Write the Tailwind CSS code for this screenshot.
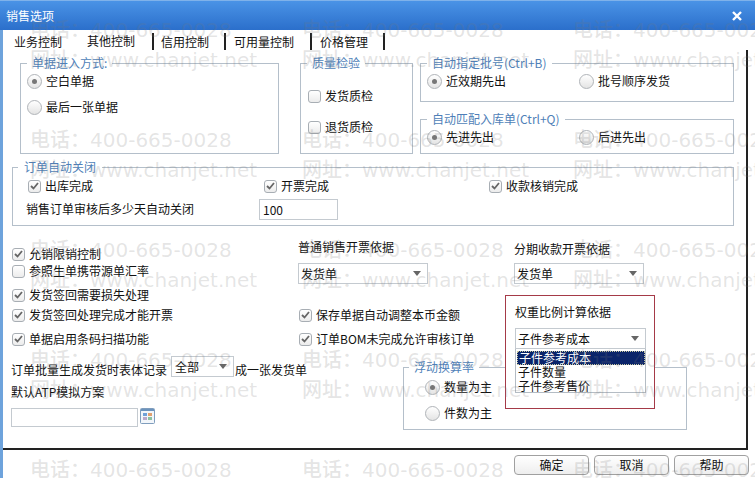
<!DOCTYPE html>
<html lang="zh-CN">
<head>
  <meta charset="UTF-8" />
  <title>销售选项</title>
  <script src="https://cdn.jsdelivr.net/npm/@tailwindcss/browser@4"></script>
</head>
<body class="bg-white">
  <div class="relative w-[755px] h-[478px] overflow-hidden bg-white text-[12px] leading-4 text-[#111] font-['Noto_Sans_CJK_SC','Liberation_Sans',sans-serif]">

    <!-- title bar -->
    <div class="h-[30px] flex items-center justify-between pl-[6px] pr-[13px] bg-gradient-to-b from-[#4a93e6] to-[#2b6fcb] text-white border-t border-[#7fb2ea]">
      <span>销售选项</span>
      <svg width="10" height="10" viewBox="0 0 10 10"><path d="M1 1l8 8M9 1l-8 8" stroke="#fff" stroke-width="2.4" /></svg>
    </div>

    <!-- body -->
    <div class="h-[448px] border-l-[3px] border-[#6ea3dc]">
      <!-- tabs -->
      <div class="flex h-[20px] pl-[11px] pt-[3px]">
        <span class="pt-[1px]">业务控制</span>
        <span class="ml-[25px] pr-[17px] border-r-2 border-[#222]">其他控制</span>
        <span class="pl-[7px] pr-[15px] pt-[1px] border-r-2 border-[#222]">信用控制</span>
        <span class="pl-[8px] pr-[16px] pt-[1px] border-r-2 border-[#222]">可用量控制</span>
        <span class="pl-[8px] pr-[15px] pt-[1px] border-r-2 border-[#222]">价格管理</span>
      </div>

      <!-- panel -->
      <div class="relative w-[745px] h-[400px] border-r-2 border-b-2 border-[#222] pl-[9px]">
        <div class="flex pt-[5px] pl-[8px]">
          <fieldset class="w-[259px] h-[99px] border border-[#b4bfca]">
            <legend class="ml-[6px] px-[5px] text-[#4f7fb8]">单据进入方式:</legend>
            <div class="flex items-center gap-1 pl-[6px] pt-[2px]">
              <span class="w-[15px] h-[15px] rounded-full border border-[#b0b4b8] bg-gradient-to-b from-white to-[#e4e4e4] flex items-center justify-center"><span class="w-[5px] h-[5px] rounded-full bg-[#777]"></span></span>
              <span>空白单据</span>
            </div>
            <div class="flex items-center gap-1 pl-[6px] pt-[10px]">
              <span class="w-[15px] h-[15px] rounded-full border border-[#b0b4b8] bg-gradient-to-b from-white to-[#e4e4e4]"></span>
              <span>最后一张单据</span>
            </div>
          </fieldset>

          <fieldset class="ml-[21px] w-[113px] h-[99px] border border-[#b4bfca]">
            <legend class="ml-[6px] px-[5px] text-[#4f7fb8]">质量检验</legend>
            <div class="flex items-center gap-1 pl-[7px] pt-[17px]">
              <span class="w-[13px] h-[13px] rounded-[3px] border border-[#a8aeb4] bg-gradient-to-b from-white to-[#ececec]"></span>
              <span>发货质检</span>
            </div>
            <div class="flex items-center gap-1 pl-[7px] pt-[15px]">
              <span class="w-[13px] h-[13px] rounded-[3px] border border-[#a8aeb4] bg-gradient-to-b from-white to-[#ececec]"></span>
              <span>退货质检</span>
            </div>
          </fieldset>

          <div class="ml-[7px] w-[314px]">
            <fieldset class="h-[47px] border border-[#b4bfca]">
              <legend class="ml-[6px] px-[5px] text-[#4f7fb8]">自动指定批号(Ctrl+B)</legend>
              <div class="flex pl-[6px] pt-[2px]">
                <div class="flex items-center gap-1 w-[152px]">
                  <span class="w-[15px] h-[15px] rounded-full border border-[#b0b4b8] bg-gradient-to-b from-white to-[#e4e4e4] flex items-center justify-center"><span class="w-[5px] h-[5px] rounded-full bg-[#777]"></span></span>
                  <span>近效期先出</span>
                </div>
                <div class="flex items-center gap-1">
                  <span class="w-[15px] h-[15px] rounded-full border border-[#b0b4b8] bg-gradient-to-b from-white to-[#e4e4e4]"></span>
                  <span>批号顺序发货</span>
                </div>
              </div>
            </fieldset>
            <fieldset class="mt-[9px] h-[43px] border border-[#b4bfca]">
              <legend class="ml-[6px] px-[5px] text-[#4f7fb8]">自动匹配入库单(Ctrl+Q)</legend>
              <div class="flex pl-[6px] pt-[2px]">
                <div class="flex items-center gap-1 w-[152px]">
                  <span class="w-[15px] h-[15px] rounded-full border border-[#b0b4b8] bg-gradient-to-b from-white to-[#e4e4e4] flex items-center justify-center"><span class="w-[5px] h-[5px] rounded-full bg-[#777]"></span></span>
                  <span>先进先出</span>
                </div>
                <div class="flex items-center gap-1">
                  <span class="w-[15px] h-[15px] rounded-full border border-[#b0b4b8] bg-gradient-to-b from-white to-[#e4e4e4]"></span>
                  <span>后进先出</span>
                </div>
              </div>
            </fieldset>
          </div>
        </div>

        <!-- 订单自动关闭 -->
        <fieldset class="mt-[5px] w-[722px] h-[67px] border border-[#b4bfca]">
          <legend class="ml-[5px] px-[6px] text-[#4f7fb8]">订单自动关闭</legend>
          <div class="flex pl-[15px] pt-[3px]">
            <div class="flex items-center gap-1 w-[236px]">
              <span class="w-[13px] h-[13px] rounded-[3px] border border-[#a8aeb4] bg-gradient-to-b from-white to-[#ececec] flex items-center justify-center"><svg width="9" height="8" viewBox="0 0 9 8"><path d="M1 4l2.5 2.5L8 1" fill="none" stroke="#666" stroke-width="1.8" /></svg></span>
              <span>出库完成</span>
            </div>
            <div class="flex items-center gap-1 w-[225px]">
              <span class="w-[13px] h-[13px] rounded-[3px] border border-[#a8aeb4] bg-gradient-to-b from-white to-[#ececec] flex items-center justify-center"><svg width="9" height="8" viewBox="0 0 9 8"><path d="M1 4l2.5 2.5L8 1" fill="none" stroke="#666" stroke-width="1.8" /></svg></span>
              <span>开票完成</span>
            </div>
            <div class="flex items-center gap-1">
              <span class="w-[13px] h-[13px] rounded-[3px] border border-[#a8aeb4] bg-gradient-to-b from-white to-[#ececec] flex items-center justify-center"><svg width="9" height="8" viewBox="0 0 9 8"><path d="M1 4l2.5 2.5L8 1" fill="none" stroke="#666" stroke-width="1.8" /></svg></span>
              <span>收款核销完成</span>
            </div>
          </div>
          <div class="flex items-center pl-[13px] mt-[5px]">
            <span class="w-[233px] -mt-px">销售订单审核后多少天自动关闭</span>
            <div class="w-[79px] h-[21px] border border-[#c4cad0] pl-[3px] flex items-center">100</div>
          </div>
        </fieldset>

        <!-- lower options -->
        <div class="flex">
          <div class="w-[287px] -ml-px">
            <div class="flex items-center gap-1 pl-px mt-[20px] h-4">
              <span class="w-[13px] h-[13px] rounded-[3px] border border-[#a8aeb4] bg-gradient-to-b from-white to-[#ececec] flex items-center justify-center"><svg width="9" height="8" viewBox="0 0 9 8"><path d="M1 4l2.5 2.5L8 1" fill="none" stroke="#666" stroke-width="1.8" /></svg></span>
              <span>允销限销控制</span>
            </div>
            <div class="flex items-center gap-1 pl-px mt-px h-4">
              <span class="w-[13px] h-[13px] rounded-[3px] border border-[#a8aeb4] bg-gradient-to-b from-white to-[#ececec]"></span>
              <span>参照生单携带源单汇率</span>
            </div>
            <div class="flex items-center gap-1 pl-px mt-[8px] h-4">
              <span class="w-[13px] h-[13px] rounded-[3px] border border-[#a8aeb4] bg-gradient-to-b from-white to-[#ececec] flex items-center justify-center"><svg width="9" height="8" viewBox="0 0 9 8"><path d="M1 4l2.5 2.5L8 1" fill="none" stroke="#666" stroke-width="1.8" /></svg></span>
              <span>发货签回需要损失处理</span>
            </div>
            <div class="flex items-center gap-1 pl-px mt-[4px] h-4">
              <span class="w-[13px] h-[13px] rounded-[3px] border border-[#a8aeb4] bg-gradient-to-b from-white to-[#ececec] flex items-center justify-center"><svg width="9" height="8" viewBox="0 0 9 8"><path d="M1 4l2.5 2.5L8 1" fill="none" stroke="#666" stroke-width="1.8" /></svg></span>
              <span>发货签回处理完成才能开票</span>
            </div>
            <div class="flex items-center gap-1 pl-px mt-[8px] h-4">
              <span class="w-[13px] h-[13px] rounded-[3px] border border-[#a8aeb4] bg-gradient-to-b from-white to-[#ececec] flex items-center justify-center"><svg width="9" height="8" viewBox="0 0 9 8"><path d="M1 4l2.5 2.5L8 1" fill="none" stroke="#666" stroke-width="1.8" /></svg></span>
              <span>单据启用条码扫描功能</span>
            </div>
            <div class="flex items-start mt-[9px] w-max whitespace-nowrap">
              <span class="mt-[6px]">订单批量生成发货时表体记录</span>
              <div class="ml-[4px] w-[63px] h-[21px] border border-[#c4cad0] pl-[3px] pr-[6px] flex items-center justify-between">
                <span>全部</span>
                <svg width="8" height="5" viewBox="0 0 8 5"><path d="M0 0h8L4 5z" fill="#666" /></svg>
              </div>
              <span class="ml-px mt-[6px]">成一张发货单</span>
            </div>
            <div class="mt-[6px] h-4">默认ATP模拟方案</div>
            <div class="flex mt-[8px]">
              <div class="w-[127px] h-[19px] border border-[#c4cad0]"></div>
              <svg width="15" height="16" viewBox="0 0 15 16" class="ml-[2px]">
                <rect x="0.5" y="0.5" width="14" height="15" rx="1" fill="#f2f6fa" stroke="#7f9dbd" />
                <rect x="1" y="1" width="13" height="2" fill="#6b93bd" />
                <rect x="3" y="5" width="4" height="3" fill="#6fa0d8" />
                <rect x="8" y="5" width="4" height="3" fill="#e0a070" />
                <rect x="3" y="9" width="4" height="3" fill="#b9a8cc" />
                <rect x="8" y="9" width="4" height="3" fill="#8cc0a0" />
              </svg>
            </div>
          </div>

          <div>
            <div class="flex">
              <div class="w-[216px] pt-[13px]">
                <div class="h-4">普通销售开票依据</div>
                <div class="mt-[8px] w-[130px] h-[21px] border border-[#c4cad0] pl-[2px] pr-[6px] flex items-center justify-between">
                  <span>发货单</span>
                  <svg width="8" height="5" viewBox="0 0 8 5"><path d="M0 0h8L4 5z" fill="#666" /></svg>
                </div>
              </div>
              <div class="w-[130px] pt-[15px]">
                <div class="h-4">分期收款开票依据</div>
                <div class="mt-[6px] w-[130px] h-[21px] border border-[#c4cad0] pl-[2px] pr-[6px] flex items-center justify-between">
                  <span>发货单</span>
                  <svg width="8" height="5" viewBox="0 0 8 5"><path d="M0 0h8L4 5z" fill="#666" /></svg>
                </div>
              </div>
            </div>
            <div class="flex items-center gap-1 pl-px mt-[23px] h-4">
              <span class="w-[13px] h-[13px] rounded-[3px] border border-[#a8aeb4] bg-gradient-to-b from-white to-[#ececec] flex items-center justify-center"><svg width="9" height="8" viewBox="0 0 9 8"><path d="M1 4l2.5 2.5L8 1" fill="none" stroke="#666" stroke-width="1.8" /></svg></span>
              <span>保存单据自动调整本币金额</span>
            </div>
            <div class="flex items-center gap-1 pl-px mt-[8px] h-4">
              <span class="w-[13px] h-[13px] rounded-[3px] border border-[#a8aeb4] bg-gradient-to-b from-white to-[#ececec] flex items-center justify-center"><svg width="9" height="8" viewBox="0 0 9 8"><path d="M1 4l2.5 2.5L8 1" fill="none" stroke="#666" stroke-width="1.8" /></svg></span>
              <span>订单BOM未完成允许审核订单</span>
            </div>
            <fieldset class="mt-[12px] ml-[105px] w-[284px] h-[71px] border border-[#b4bfca]">
              <legend class="ml-[5px] px-[5px] text-[#4f7fb8]">浮动换算率</legend>
              <div class="flex items-center gap-1 pl-[21px] pt-[4px]">
                <span class="w-[15px] h-[15px] rounded-full border border-[#b0b4b8] bg-gradient-to-b from-white to-[#e4e4e4] flex items-center justify-center"><span class="w-[5px] h-[5px] rounded-full bg-[#777]"></span></span>
                <span>数量为主</span>
              </div>
              <div class="flex items-center gap-1 pl-[21px] pt-[10px]">
                <span class="w-[15px] h-[15px] rounded-full border border-[#b0b4b8] bg-gradient-to-b from-white to-[#e4e4e4]"></span>
                <span>件数为主</span>
              </div>
            </fieldset>
          </div>
        </div>

        <!-- red annotation box with the open dropdown -->
        <div class="absolute left-[502px] top-[245px] w-[150px] h-[114px] border border-[#a53a48] bg-white pl-[9px] pt-[8px]">
          <div class="h-4">权重比例计算依据</div>
          <div class="mt-[8px] w-[131px] h-[21px] border border-[#c4cad0] pl-[2px] pr-[6px] flex items-center justify-between">
            <span>子件参考成本</span>
            <svg width="8" height="5" viewBox="0 0 8 5"><path d="M0 0h8L4 5z" fill="#666" /></svg>
          </div>
          <div class="w-[131px] h-[44px] border border-t-0 border-[#b4bcc4] pt-[2px] leading-[14px]">
            <div class="ml-px h-[14px] bg-[#0a246a] text-white border border-dotted border-[#c8c8a0] pl-px leading-[12px] whitespace-nowrap">子件参考成本</div>
            <div class="pl-[2px] h-[14px]">子件数量</div>
            <div class="pl-[2px] h-[14px]">子件参考售价</div>
          </div>
        </div>
      </div>

      <!-- footer buttons -->
      <div class="flex justify-end gap-[5px] pr-[6px] pt-[5px]">
        <button class="w-[75px] h-[20px] rounded-[4px] border border-[#a0a0a0] bg-gradient-to-b from-white to-[#eeeeee] flex items-center justify-center">确定</button>
        <button class="w-[75px] h-[20px] rounded-[4px] border border-[#a0a0a0] bg-gradient-to-b from-white to-[#eeeeee] flex items-center justify-center">取消</button>
        <button class="w-[75px] h-[20px] rounded-[4px] border border-[#a0a0a0] bg-gradient-to-b from-white to-[#eeeeee] flex items-center justify-center">帮助</button>
      </div>
    </div>

    <!-- watermark -->
    <div id="watermark" class="absolute inset-0 pointer-events-none"></div>
  </div>

  <script>
    // Repeat the phone and site lines over the whole dialog
    const watermark = document.getElementById("watermark");
    const lines = [];
    [30, 140, 250, 360, 470].forEach((y) => lines.push([y, "电话：400-665-0028"]));
    [60, 170, 280, 390].forEach((y) => lines.push([y, "网址：www.chanjet.net"]));
    lines.forEach(([y, text]) => {
      [30, 302, 573].forEach((x) => {
        const item = document.createElement("span");
        item.className = "absolute whitespace-nowrap text-[20px] leading-6 font-medium text-[#777]/20 font-['DejaVu_Sans','Noto_Sans_CJK_SC',sans-serif]";
        item.style.left = x + "px";
        item.style.top = y - 12 + "px";
        item.textContent = text;
        watermark.appendChild(item);
      });
    });
  </script>
</body>
</html>
